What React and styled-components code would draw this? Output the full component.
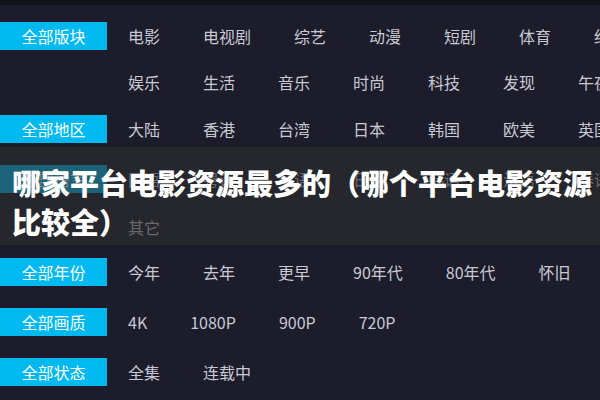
import React from "react";
import styled, { createGlobalStyle } from "styled-components";

const GlobalStyle = createGlobalStyle`
  html, body {
    margin: 0;
    padding: 0;
    width: 600px;
    height: 400px;
    overflow: hidden;
    background: #1c1c2b;
    font-family: "Noto Sans CJK SC", "Noto Sans", sans-serif;
  }
`;

const Page = styled.div`
  position: relative;
  width: 600px;
  height: 400px;
  overflow: hidden;
  background: #1c1c2b;
  border-top: 5px solid #13131c;
  box-sizing: border-box;
`;

const Filters = styled.div`
  display: flex;
  flex-direction: column;
`;

const Row = styled.div`
  display: flex;
  align-items: center;
  height: 28px;
  margin-top: ${({ $mt }) => $mt}px;
  white-space: nowrap;
`;

const Label = styled.div`
  flex: 0 0 107px;
  height: 28px;
  line-height: 28px;
  text-align: center;
  font-size: 16px;
  color: #ffffff;
  background: ${({ $empty }) => ($empty ? "transparent" : "#00b9f1")};
`;

const Items = styled.div`
  display: flex;
  gap: 43px;
  margin-left: 21px;
`;

const Item = styled.span`
  font-size: 16px;
  color: #c9c9d3;
  flex: 0 0 auto;
`;

const TitleBand = styled.div`
  position: absolute;
  left: 0;
  right: 0;
  top: 142px;
  height: 98px;
  padding: 16px 0 0 12px;
  box-sizing: border-box;
  background: rgba(45, 45, 46, 0.62);
`;

const Title = styled.h1`
  margin: 0;
  font-size: 29px;
  line-height: 39px;
  font-weight: 900;
  color: #ffffff;
  white-space: nowrap;
`;

const rows = [
  { label: "全部版块", mt: 17, items: ["电影", "电视剧", "综艺", "动漫", "短剧", "体育", "纪录片"] },
  { label: "", mt: 18, items: ["娱乐", "生活", "音乐", "时尚", "科技", "发现", "午夜"] },
  { label: "全部地区", mt: 19, items: ["大陆", "香港", "台湾", "日本", "韩国", "欧美", "英国"] },
  { label: "全部语言", mt: 22, items: ["国语", "粤语", "英语", "日语", "韩语", "法语", "泰语"] },
  { label: "", mt: 20, items: ["其它"] },
  { label: "全部年份", mt: 17, items: ["今年", "去年", "更早", "90年代", "80年代", "怀旧"] },
  { label: "全部画质", mt: 22, items: ["4K", "1080P", "900P", "720P"] },
  { label: "全部状态", mt: 22, items: ["全集", "连载中"] },
];

export default function App() {
  return (
    <>
      <GlobalStyle />
      <Page>
        <Filters>
          {rows.map((row, i) => (
            <Row key={i} $mt={row.mt}>
              <Label $empty={!row.label}>{row.label}</Label>
              <Items>
                {row.items.map((it) => (
                  <Item key={it}>{it}</Item>
                ))}
              </Items>
            </Row>
          ))}
        </Filters>
        <TitleBand>
          <Title>
            哪家平台电影资源最多的（哪个平台电影资源
            <br />
            比较全）
          </Title>
        </TitleBand>
      </Page>
    </>
  );
}
